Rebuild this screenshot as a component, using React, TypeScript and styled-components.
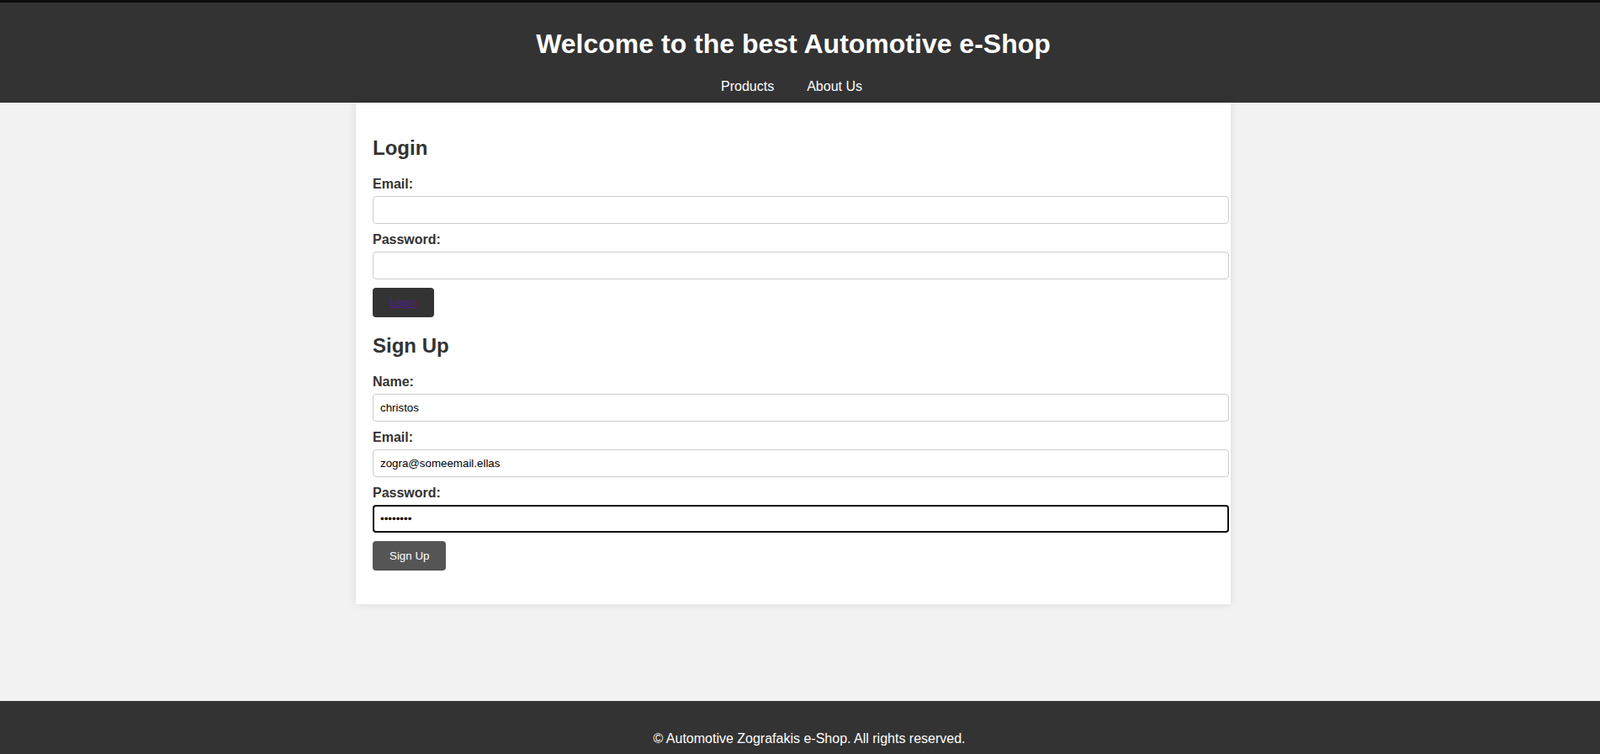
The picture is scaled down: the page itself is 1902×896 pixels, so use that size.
import React from "react";
import styled, { createGlobalStyle } from "styled-components";

const GlobalStyle = createGlobalStyle`
    html, body {
        margin: 0;
        padding: 0;
    }
    body {
        font-family: "Liberation Sans", Arial, sans-serif;
        background: #f2f2f2;
        color: #333;
        overflow: hidden;
    }
`;

const Page = styled.div`
    display: flex;
    flex-direction: column;
    width: 100%;
`;

const Header = styled.header`
    background: #333;
    color: #fff;
    border-top: 3px solid #0c0c0c;
    padding: 10px 16px 10px 0;
    text-align: center;
`;

const Title = styled.h1`
    margin: 21px 0 23px 0;
    font-size: 32px;
    font-weight: 700;
    line-height: normal;
`;

const Nav = styled.nav`
    display: flex;
    justify-content: center;
    padding-right: 4px;
`;

const NavLink = styled.a`
    color: #fff;
    text-decoration: none;
    font-size: 16px;
    margin: 0 19.5px;
    cursor: pointer;
`;

const Main = styled.main`
    padding: 0 16px 115px 0;
`;

const Card = styled.div`
    width: 1000px;
    margin: 0 auto;
    padding: 20px;
    background: #fff;
    box-shadow: 0 0 10px rgba(0, 0, 0, 0.1);
`;

const Section = styled.form`
    margin-bottom: 20px;
`;

const Heading = styled.h2`
    font-size: 24px;
    font-weight: 700;
    margin: 20px 0;
    color: #333;
`;

const Label = styled.label`
    display: block;
    font-size: 16px;
    font-weight: 700;
    margin-bottom: 5px;
    color: #333;
`;

const Input = styled.input<{ $focused?: boolean }>`
    display: block;
    width: 100%;
    box-sizing: content-box;
    padding: 8px;
    margin: 0 0 10px 0;
    border: 1px solid #ccc;
    border-radius: 4px;
    font-family: "Liberation Sans", Arial, sans-serif;
    font-size: 13.333px;
    line-height: 15px;
    color: #000;
    background: #fff;
    outline: ${(p) => (p.$focused ? "2px solid #101010" : "none")};
    outline-offset: -2px;
`;

const Button = styled.button<{ $bg: string }>`
    display: inline-block;
    padding: 10px 20px;
    border: none;
    border-radius: 4px;
    background: ${(p) => p.$bg};
    color: #fff;
    font-family: "Liberation Sans", Arial, sans-serif;
    font-size: 13.333px;
    line-height: 15px;
    cursor: pointer;
`;

const ButtonLink = styled.a`
    color: #551a8b;
    text-decoration: underline;
`;

const Footer = styled.footer`
    background: #333;
    color: #fff;
    padding: 20px 0 20px 22px;
    text-align: center;
`;

const FooterText = styled.p`
    margin: 16px 0;
    font-size: 16px;
`;

export default function App() {
    return (
        <Page>
            <GlobalStyle />
            <Header>
                <Title>Welcome to the best Automotive e-Shop</Title>
                <Nav>
                    <NavLink>Products</NavLink>
                    <NavLink>About Us</NavLink>
                </Nav>
            </Header>
            <Main>
                <Card>
                    <Section onSubmit={(e) => e.preventDefault()}>
                        <Heading>Login</Heading>
                        <Label>Email:</Label>
                        <Input type="email" />
                        <Label>Password:</Label>
                        <Input type="password" />
                        <Button type="submit" $bg="#333">
                            <ButtonLink>Login</ButtonLink>
                        </Button>
                    </Section>
                    <Section onSubmit={(e) => e.preventDefault()}>
                        <Heading>Sign Up</Heading>
                        <Label>Name:</Label>
                        <Input type="text" defaultValue="christos" />
                        <Label>Email:</Label>
                        <Input type="email" defaultValue="zogra@someemail.ellas" />
                        <Label>Password:</Label>
                        <Input type="password" defaultValue="zografak" $focused />
                        <Button type="submit" $bg="#555">Sign Up</Button>
                    </Section>
                </Card>
            </Main>
            <Footer>
                <FooterText>© Automotive Zografakis e-Shop. All rights reserved.</FooterText>
            </Footer>
        </Page>
    );
}
